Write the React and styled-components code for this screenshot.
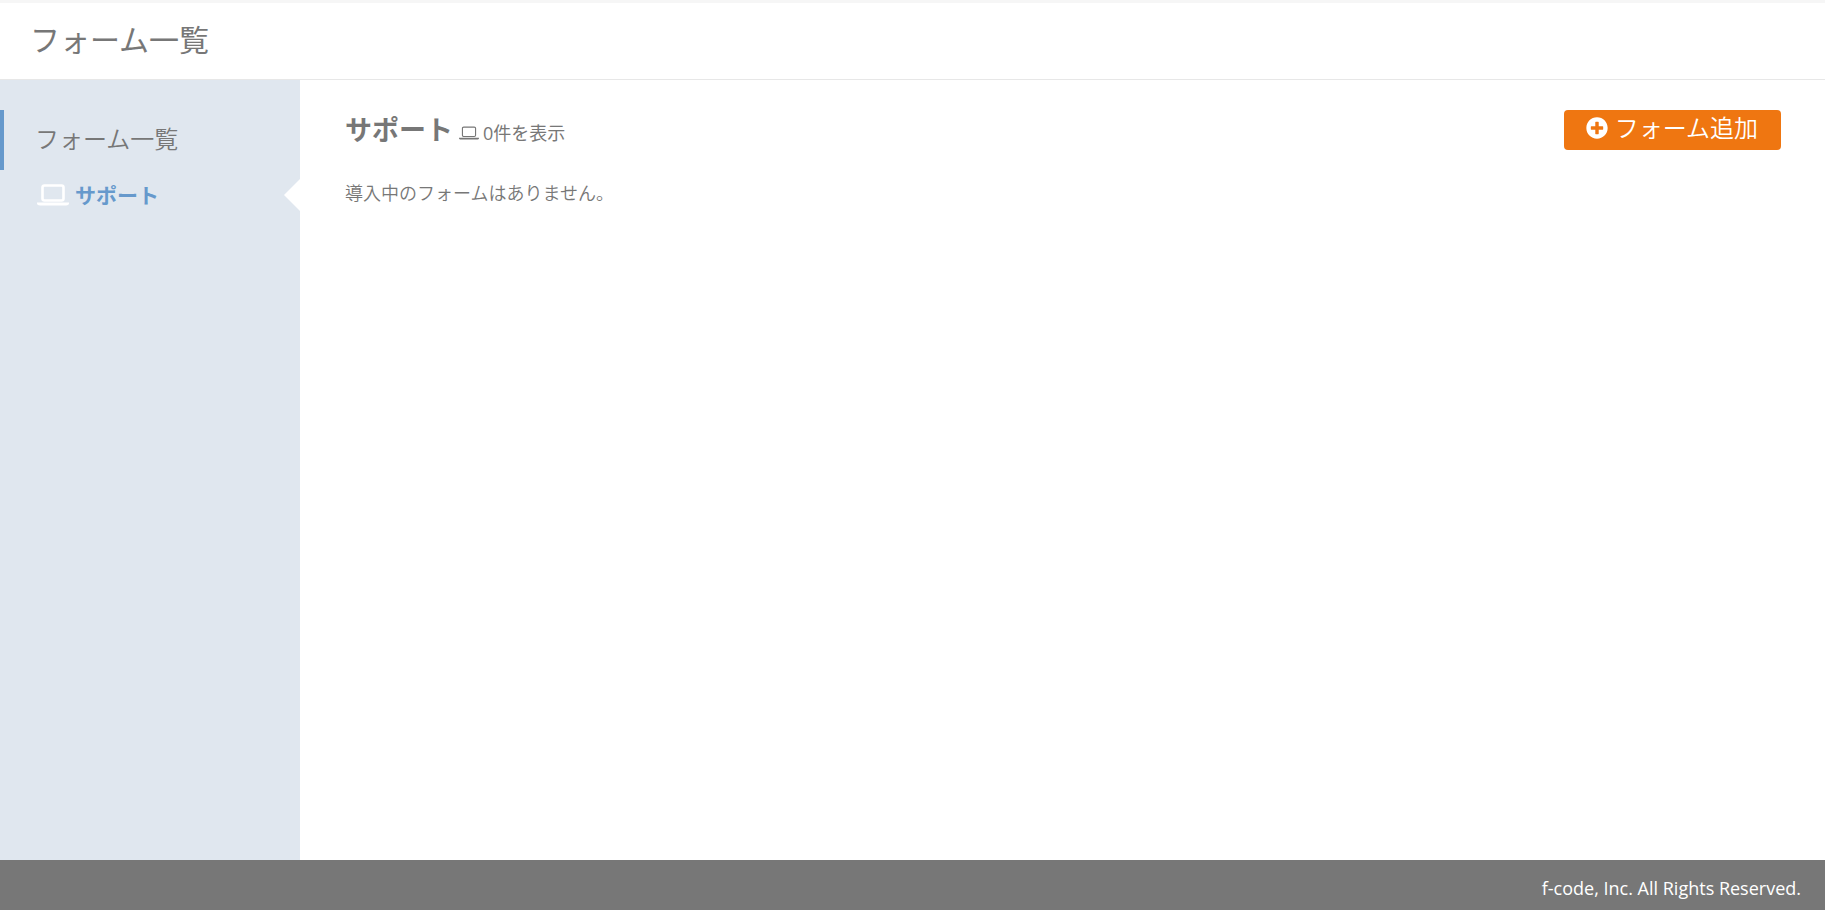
import React from "react";
import styled, { createGlobalStyle } from "styled-components";
import { FaPlusCircle } from "react-icons/fa";

const GlobalStyle = createGlobalStyle`
  *, *::before, *::after { box-sizing: border-box; }
  body {
    margin: 0;
    background: #fff;
    color: #777;
    font-family: "Open Sans", "Noto Sans CJK JP", sans-serif;
    font-size: 18px;
    line-height: 28px;
  }
`;

const Page = styled.div`
  display: flex;
  flex-direction: column;
  min-height: 100vh;
`;

const Header = styled.header`
  height: 80px;
  padding: 15px 30px 0;
  border-top: 3px solid #f6f6f6;
  border-bottom: 1px solid #e7e7e7;
`;

const PageTitle = styled.h1`
  margin: 0;
  font-size: 30px;
  line-height: 44px;
  font-weight: 400;
`;

const Body = styled.div`
  display: flex;
  flex: 1;
`;

const Sidebar = styled.nav`
  width: 300px;
  flex-shrink: 0;
  padding-top: 30px;
  background: #e0e7ef;
`;

const SidebarHeading = styled.h2`
  display: flex;
  align-items: center;
  height: 60px;
  margin: 0;
  padding: 0 0 2px 31px;
  border-left: 4px solid #69c;
  font-size: 24px;
  font-weight: 350;
`;

const SidebarList = styled.ul`
  margin: 0;
  padding: 0;
  list-style: none;
`;

const SidebarLink = styled.a`
  position: relative;
  display: flex;
  align-items: center;
  gap: 6px;
  height: 50px;
  padding-left: 37px;
  color: #69c;
  font-size: 21px;
  font-weight: 700;
  text-decoration: none;

  &::after {
    content: "";
    position: absolute;
    top: 9px;
    right: 0;
    border: 16px solid transparent;
    border-left-width: 0;
    border-right-color: #fff;
  }
`;

const Laptop = styled.svg`
  flex-shrink: 0;
  width: ${(p) => p.$width}px;
  height: ${(p) => p.$height}px;
`;

const Main = styled.main`
  flex: 1;
  padding: 30px 44px 30px 45px;
`;

const ContentHeader = styled.div`
  display: flex;
  justify-content: space-between;
  align-items: flex-start;
`;

const Summary = styled.div`
  display: flex;
  align-items: baseline;
  gap: 6px;
`;

const ContentTitle = styled.h2`
  margin: 0;
  font-size: 27px;
  line-height: 40px;
  font-weight: 700;
`;

const Count = styled.span`
  display: flex;
  align-items: baseline;
  gap: 4px;
`;

const AddButton = styled.button`
  display: flex;
  align-items: center;
  gap: 7px;
  height: 40px;
  padding: 0 23px 4px 22px;
  border: 0;
  border-radius: 4px;
  background: #ef7611;
  color: #fff;
  font: inherit;
  font-size: 24px;
  font-weight: 350;
  cursor: pointer;
`;

const EmptyMessage = styled.p`
  margin: 29px 0 0;
  font-weight: 350;
`;

const Footer = styled.footer`
  height: 50px;
  padding: 14px 24px 0;
  background: #777;
  color: #fff;
  text-align: right;
`;

function LaptopIcon({ width, height, color, stroke }) {
  return (
    <Laptop viewBox="0 5 32 22" $width={width} $height={height} color={color} aria-hidden="true">
      <rect x="5.500" y="6.500" width="21" height="15" rx="2" fill="none" stroke="currentColor" strokeWidth={stroke} />
      <path d="M0 23.500H32V24.500c0 1.200-1.400 2-3 2H3c-1.600 0-3-.8-3-2Z" fill="currentColor" />
    </Laptop>
  );
}

export default function App() {
  return (
    <Page lang="ja">
      <GlobalStyle />
      <Header>
        <PageTitle>フォーム一覧</PageTitle>
      </Header>
      <Body>
        <Sidebar>
          <SidebarHeading>フォーム一覧</SidebarHeading>
          <SidebarList>
            <li>
              <SidebarLink href="#support" aria-current="page">
                <LaptopIcon width={32} height={22} color="#fff" stroke={2.6} />
                サポート
              </SidebarLink>
            </li>
          </SidebarList>
        </Sidebar>
        <Main>
          <ContentHeader>
            <Summary>
              <ContentTitle>サポート</ContentTitle>
              <Count>
                <LaptopIcon width={20} height={14} color="#777" stroke={1.8} />
                0件を表示
              </Count>
            </Summary>
            <AddButton type="button">
              <FaPlusCircle size={22} aria-hidden="true" />
              フォーム追加
            </AddButton>
          </ContentHeader>
          <EmptyMessage>導入中のフォームはありません。</EmptyMessage>
        </Main>
      </Body>
      <Footer>f-code, Inc. All Rights Reserved.</Footer>
    </Page>
  );
}
